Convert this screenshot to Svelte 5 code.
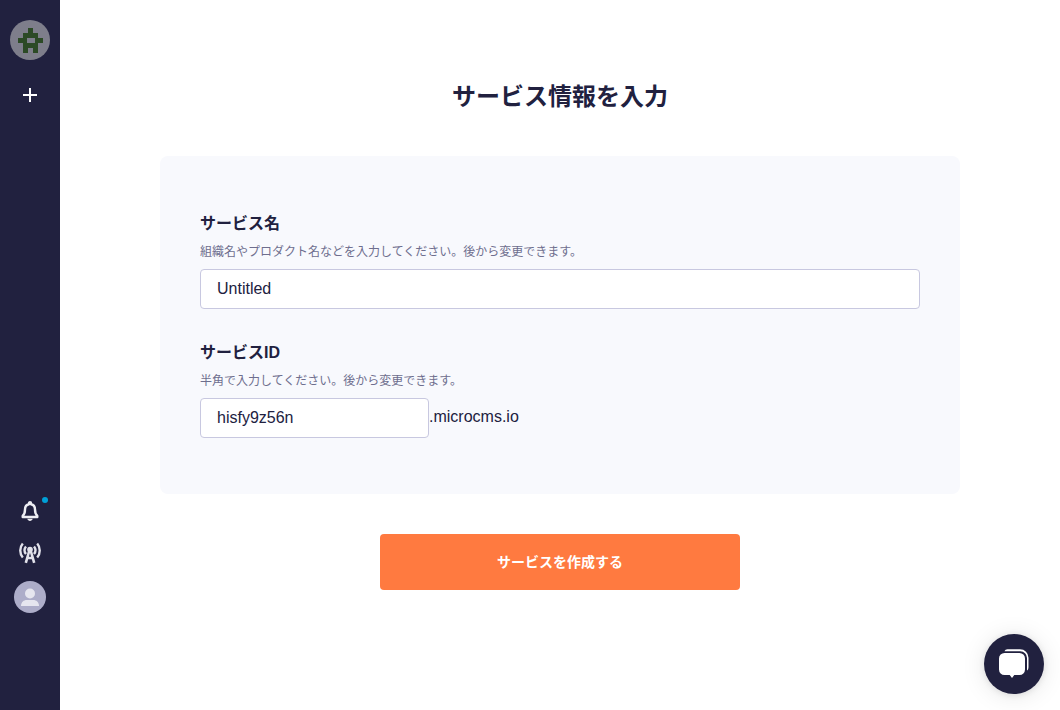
<script>
	let serviceName = $state('Untitled');
	let serviceId = $state('hisfy9z56n');
</script>

<div class="layout">
	<nav class="sidebar">
		<div class="top">
			<button class="logo" aria-label="service">
				<svg width="40" height="40" viewBox="0 0 40 40">
					<circle cx="20" cy="20" r="20" fill="#7e7e8b" />
					<path
						fill="#2c4a26"
						fill-rule="evenodd"
						d="M18 8h5v5h5v5h5v5h-5v10h-5v-5h-5v5h-5v-10H8v-5h5v-5h5zM17 18v5h8v-5z"
					/>
				</svg>
			</button>
			<button class="plus" aria-label="add">
				<svg width="16" height="16" viewBox="0 0 16 16">
					<path d="M8 1v14M1 8h14" stroke="#fff" stroke-width="2" />
				</svg>
			</button>
		</div>
		<div class="bottom">
			<button class="bell" aria-label="notifications">
				<svg width="18" height="20" viewBox="0 0 18 20">
					<path
						d="M9 1.200c.7 0 1 .4 1 1v1.100C12.800 3.800 14 5.900 14 8.500c0 3.700.9 5 2.300 6.300v1.200H1.700v-1.200C3.100 13.500 4 12.200 4 8.500c0-2.600 1.200-4.700 4-5.200V2.200c0-.6.300-1 1-1z"
						fill="none"
						stroke="#eeeef4"
						stroke-width="2.400"
						stroke-linejoin="round"
					/>
					<path d="M6.300 17.800h5.400c-.3 1.300-1.400 2.200-2.700 2.200s-2.400-.9-2.700-2.200z" fill="#eeeef4" />
				</svg>
				<span class="dot"></span>
			</button>
			<button class="radio" aria-label="news">
				<svg width="22" height="22" viewBox="0 0 22 22" fill="none" stroke="#e2e2ea">
					<path d="M3.800 1.500C.4 5.500.4 11.500 3.800 15.500M18.200 1.500c3.400 4 3.400 10 0 14" stroke-width="2.400" />
					<path d="M7 4.500c-1.800 2.200-1.800 5.300 0 7.500M15 4.500c1.800 2.200 1.800 5.300 0 7.500" stroke-width="2.400" />
					<circle cx="11" cy="7.500" r="2.800" fill="#e2e2ea" stroke="none" />
					<path d="M10.500 8 6.800 20.800M11.500 8l3.700 12.800M8.500 16h5" stroke-width="2.600" />
				</svg>
			</button>
			<button class="avatar" aria-label="account">
				<svg width="32" height="32" viewBox="0 0 32 32">
					<circle cx="16" cy="16" r="16" fill="#adadc9" />
					<circle cx="16" cy="12.500" r="5" fill="#e6e6ef" />
					<path d="M7 25c0-4 3-6 5.500-6h7c2.500 0 5.500 2 5.500 6z" fill="#e6e6ef" />
				</svg>
			</button>
		</div>
	</nav>

	<main class="main">
		<h1>サービス情報を入力</h1>
		<form class="card" onsubmit={(e) => e.preventDefault()}>
			<div class="field">
				<label for="name">サービス名</label>
				<p>組織名やプロダクト名などを入力してください。後から変更できます。</p>
				<input id="name" bind:value={serviceName} />
			</div>
			<div class="field">
				<label for="sid">サービスID</label>
				<p>半角で入力してください。後から変更できます。</p>
				<div class="id-row">
					<input id="sid" class="short" bind:value={serviceId} />
					<span>.microcms.io</span>
				</div>
			</div>
		</form>
		<button class="submit"><span>サービスを作成する</span></button>
	</main>

	<button class="chat" aria-label="chat">
		<svg width="32" height="32" viewBox="0 0 32 32">
			<path
				d="M6.500 3.300C7 2 8 1.300 9.500 1.300H22a8.500 8.500 0 0 1 8.500 8.500V19c0 1.500-.5 3-1.500 3.500V10a6.700 6.700 0 0 0-6.700-6.700z"
				fill="#fff"
			/>
			<path
				d="M6.500 5h15a5.500 5.500 0 0 1 5.500 5.500v11a5.500 5.500 0 0 1-5.500 5.500h-5.200L14 30l-2.300-3H6.500A5.500 5.500 0 0 1 1 21.500v-11A5.500 5.500 0 0 1 6.500 5z"
				fill="#fff"
			/>
		</svg>
	</button>
</div>

<style>
	:global(body) {
		font-family: "Liberation Sans", "Noto Sans CJK JP", sans-serif;
		color: #21213f;
	}

	button {
		border: none;
		background: none;
		padding: 0;
		cursor: pointer;
		font-family: inherit;
	}

	.layout {
		display: flex;
		height: 710px;
		overflow: hidden;
		position: relative;
	}

	.sidebar {
		width: 60px;
		flex-shrink: 0;
		background-color: #21213f;
		display: flex;
		flex-direction: column;
		justify-content: space-between;
		align-items: center;
		padding: 20px 0 97px;
		box-sizing: border-box;
	}

	.top,
	.bottom {
		display: flex;
		flex-direction: column;
		align-items: center;
	}

	.top button,
	.bottom button {
		display: block;
		line-height: 0;
	}

	.plus {
		margin-top: 27px;
	}

	.bell {
		position: relative;
	}

	.dot {
		position: absolute;
		top: -4px;
		right: -9px;
		width: 6px;
		height: 6px;
		border-radius: 50%;
		background-color: #00a0d8;
	}

	.radio {
		margin-top: 21px;
	}

	.avatar {
		margin-top: 17px;
	}

	.main {
		flex: 1;
		display: flex;
		flex-direction: column;
		align-items: center;
		padding: 0 100px;
	}

	h1 {
		font-size: 24px;
		font-weight: bold;
		line-height: 36px;
		margin: 79px 0 41px;
	}

	.card {
		width: 800px;
		box-sizing: border-box;
		background-color: #f8f9fd;
		border-radius: 8px;
		padding: 56px 40px 0;
		display: flex;
		flex-direction: column;
		gap: 32px;
		height: 338px;
	}

	label {
		display: block;
		font-size: 16px;
		font-weight: bold;
		line-height: 24px;
	}

	.field p {
		margin: 7px 0 8px;
		font-size: 12px;
		line-height: 18px;
		color: #6e6e8e;
	}

	input {
		display: block;
		width: 100%;
		height: 40px;
		box-sizing: border-box;
		padding: 0 16px;
		border: 1px solid #c8c8e0;
		border-radius: 4px;
		background: #fff;
		font-family: inherit;
		font-size: 16px;
		color: #21213f;
		outline: none;
	}

	.id-row {
		display: flex;
		align-items: flex-start;
	}

	.short {
		width: 229px;
	}

	.id-row span {
		font-size: 16px;
		line-height: 38px;
	}

	.submit {
		width: 360px;
		height: 56px;
		margin-top: 40px;
		padding-bottom: 2px;
		border-radius: 4px;
		background-color: #ff7a40;
		color: #fff;
		font-size: 14px;
		font-weight: bold;
	}

	.chat {
		position: absolute;
		right: 16px;
		bottom: 16px;
		width: 60px;
		height: 60px;
		border-radius: 50%;
		background-color: #21213f;
		box-shadow: 0 1px 6px rgba(0, 0, 0, 0.1), 0 2px 24px rgba(0, 0, 0, 0.1);
		display: flex;
		align-items: center;
		justify-content: center;
	}
</style>
